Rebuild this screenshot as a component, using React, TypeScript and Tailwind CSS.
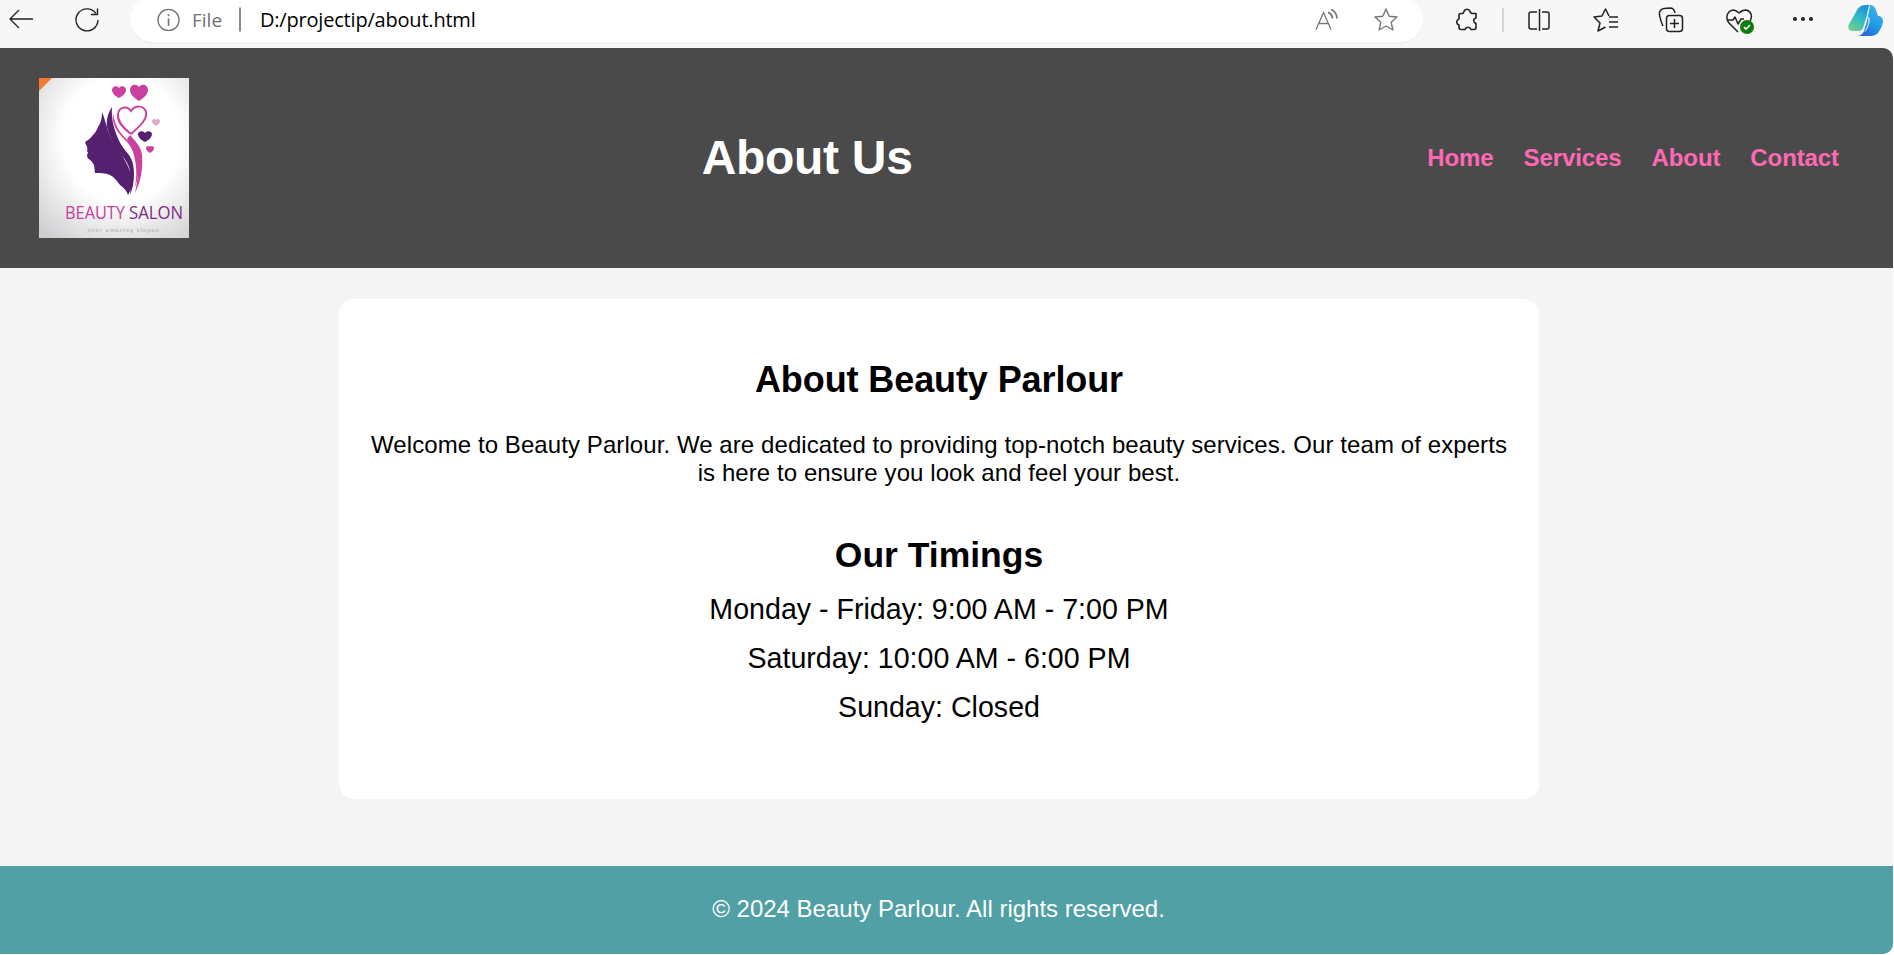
import React from "react";

const Logo = () => (
  <svg viewBox="0 0 150 160" className="w-[150px] h-[160px] block">
    <defs>
      <radialGradient id="logoBg" cx="55%" cy="38%" r="78%">
        <stop offset="0.5" stopColor="#ffffff" />
        <stop offset="1" stopColor="#cfcfd2" />
      </radialGradient>
    </defs>
    <rect width="150" height="160" fill="url(#logoBg)" />
    <path d="M0 0H13L0 13Z" fill="#f47b36" />
    {/* hearts */}
    <path d="M80 20c-4-2-7-5-7-8 0-4 5-5 7-2 2-3 7-2 7 2 0 3-3 6-7 8Z" fill="#c9409f" />
    <path d="M100 23c-5-3-9-7-9-11 0-5 6-7 9-3 3-4 9-2 9 3 0 4-4 8-9 11Z" fill="#c9409f" />
    <path d="M117 48c-2-1-4-3-4-5 0-2 3-3 4-1 1-2 4-1 4 1 0 2-2 4-4 5Z" fill="#e5a8d0" />
    <path d="M106 64c-4-2-7-5-7-8 0-3 5-4 7-1 2-3 7-2 7 1 0 3-3 6-7 8Z" fill="#55206f" />
    <path d="M111 75c-2-1-4-3-4-5 0-2 3-3 4-1 1-2 4-1 4 1 0 2-2 4-4 5Z" fill="#c9409f" />
    {/* heart shaped hair line */}
    <path d="M92 56C84 50 78 44 79 36c1-7 9-9 13-3 4-6 13-6 15 1 2 7-7 15-15 22" fill="none" stroke="#c9409f" strokeWidth="2" />
    <path d="M74 35c-1 7 1 13 5 19 5 7 12 11 15 20 4 12 4 24 2 35 5-13 4-24-1-36-3-8-9-13-14-19-4-6-6-12-7-19Z" fill="#c9409f" />
    <path d="M91 57c5 6 11 11 12 20 1 14-1 26-7 38 3-13 4-24 1-34-2-8-6-13-9-20Z" fill="#c9409f" />
    {/* face */}
    <path d="M63 34c0 6-1 11-4 15-1 3-3 6-5 8-2 3-5 5-8 7l2 5c1 2 0 3 0 4l1 2-1 2c0 2 1 4 3 5 3 2 3 4 4 5l1 8c5 0 10 0 15 2 4 2 7 6 10 10 4 3 7 6 8 10 3-5 5-10 4-15-1-9-5-16-9-23-4-7-10-13-13-21-3-7-4-14-8-24Z" fill="#55206f" />
    <path d="M73 29c-4 6-6 13-5 20 2 9 6 17 11 24 6 7 11 13 12 20 1 8 1 16 0 24 3-7 4-14 4-21 0-7-1-13-5-19-5-6-9-11-12-19-3-8-6-17-5-29Z" fill="#55206f" />
    <text x="26" y="141" fontFamily="'Open Sans', sans-serif" fontSize="18" fill="#c13f9c" textLength="60" lengthAdjust="spacingAndGlyphs">BEAUTY</text>
    <text x="90" y="141" fontFamily="'Open Sans', sans-serif" fontSize="18" fill="#7b2a84" textLength="54" lengthAdjust="spacingAndGlyphs">SALON</text>
    <text x="84" y="154" textAnchor="middle" fontFamily="'Liberation Serif', serif" fontStyle="italic" fontSize="6" fill="#a5a5a5" textLength="71">
      your amazing slogan
    </text>
  </svg>
);

const Copilot = () => (
  <svg viewBox="0 0 36 32" className="w-9 h-8 ml-[35px] -mt-[8px] shrink-0">
    <defs>
      <linearGradient id="copA" x1="0.7" y1="0" x2="0.2" y2="1">
        <stop offset="0" stopColor="#1c8fdc" />
        <stop offset="0.45" stopColor="#2fb8c8" />
        <stop offset="1" stopColor="#6fd08a" />
      </linearGradient>
      <linearGradient id="copB" x1="0.8" y1="0" x2="0.2" y2="1">
        <stop offset="0" stopColor="#3fb4ee" />
        <stop offset="0.55" stopColor="#1f9ae6" />
        <stop offset="1" stopColor="#2b5fd6" />
      </linearGradient>
    </defs>
    <path d="M22 1c3 0 5 2 6 5l2 6c3 0 5 2 5 5 0 4-3 10-6 13-2 1-4 2-6 2H9c3 0 6-2 7-5l3-10c1-5 2-10 3-16Z" fill="url(#copB)" />
    <path d="M22 1h-4C12 1 10 4 8 8L1 20c-2 4 0 7 4 7h5c4 0 5-2 6-6l3-10c1-5 1-9 3-10Z" fill="url(#copA)" />
    <path d="M20 13c1 5-1 11-4 15l2-1c3-4 4-9 4-13Z" fill="#e8f6ff" opacity=".75" />
  </svg>
);

const Toolbar = () => (
  <div className="h-12 bg-[#f7f7f7] flex items-center text-black overflow-hidden">
    {/* back */}
    <svg viewBox="0 0 24 20" className="w-6 h-5 ml-[9px] -mt-[10px] shrink-0" fill="none" stroke="#222" strokeWidth="1.3">
      <path d="M24 10H1M10 1 1 10l9 9" />
    </svg>
    {/* reload */}
    <svg viewBox="0 0 26 26" className="w-[26px] h-[26px] ml-[41px] -mt-[9px] shrink-0" fill="none" stroke="#222" strokeWidth="1.4">
      <path d="M22 6.500A11 11 0 1 0 24 13" />
      <path d="M23.500 1.500V7.500H17" />
    </svg>
    {/* address bar */}
    <div className="ml-[30px] w-[1293px] h-[46px] -mt-[8px] -translate-y-[0.5px] bg-white rounded-full flex items-center shrink-0 shadow-[0_1px_1px_rgba(0,0,0,0.06)]">
      <svg viewBox="0 0 24 24" className="w-[23px] h-[23px] ml-[27px] shrink-0" fill="none" stroke="#707070" strokeWidth="1.3">
        <circle cx="12" cy="12" r="11" />
        <path d="M12 10.500V18" strokeWidth="1.6" />
        <circle cx="12" cy="7" r="1" fill="#707070" stroke="none" />
      </svg>
      <span className="ml-3 w-[30px] text-[19px] text-[#6f6f6f] font-['Open_Sans',sans-serif]">File</span>
      <div className="ml-[17px] w-[2px] h-[24px] bg-[#8a8a8a]" />
      <span className="ml-[19px] text-[20px] text-black font-['Open_Sans',sans-serif] tracking-[-0.2px]">D:/projectip/about.html</span>
      <svg viewBox="0 0 24 22" className="w-6 h-[22px] ml-auto shrink-0" fill="none" stroke="#777" strokeWidth="1.3">
        <path d="M1 21 8.500 4 16 21M4 15h9" />
        <path d="M13 4c3 .5 4 3 4.500 6M16 1c3.500 1 6 5 6 9" strokeWidth="1.8" />
      </svg>
      <svg viewBox="0 0 24 24" className="w-6 h-6 ml-[35px] mr-[25px] shrink-0" fill="none" stroke="#777" strokeWidth="1.4" strokeLinejoin="round">
        <path d="m12 1.500 3.200 7.200 7.800.8-5.800 5.300 1.700 7.700L12 18.500l-6.900 4 1.700-7.700L1 9.500l7.800-.8Z" />
      </svg>
    </div>
    {/* puzzle */}
    <svg viewBox="0 0 22 24" className="w-[22px] h-6 ml-[33px] -mt-[8px] shrink-0" fill="none" stroke="#222" strokeWidth="1.6" strokeLinejoin="round">
      <path d="M8 3.500c1-3 5-3 6 0 .5 1.500 1 2 2.500 2h3.500v4.500c-3 .5-3 4.500 0 5.500v4c0 1.500-.5 2-2 2h-3c-1-3-5-3-6 0H5c-1.500 0-2-.5-2-2v-2.500c-3-1-3-5 0-6V7.500c0-1.500.5-2 2-2h1.500c.8 0 1.200-1 1.500-2Z" />
    </svg>
    <div className="ml-6 w-[2px] h-6 bg-[#d4d4d4] -mt-[8px] shrink-0" />
    {/* split screen */}
    <svg viewBox="0 0 24 24" className="w-6 h-6 ml-[23px] -mt-[8px] shrink-0" fill="none" stroke="#222" strokeWidth="1.5">
      <path d="M10 4H4a2 2 0 0 0-2 2v13a2 2 0 0 0 2 2h6M15 4h5a2 2 0 0 1 2 2v13a2 2 0 0 1-2 2h-5M12.500 1v22" />
    </svg>
    {/* favourites */}
    <svg viewBox="0 0 26 24" className="w-[26px] h-6 ml-[42px] -mt-[8px] shrink-0" fill="none" stroke="#222" strokeWidth="1.5" strokeLinejoin="round">
      <path d="M16 8 12.500 1 9 8l-8 1 6 6-2 8 7.500-4" />
      <path d="M16 9h9M16 14h9M16 19h9" />
    </svg>
    {/* collections */}
    <svg viewBox="0 0 26 26" className="w-[26px] h-[26px] ml-[39px] -mt-[8px] shrink-0" fill="none" stroke="#222" strokeWidth="1.5">
      <rect x="8.500" y="8.500" width="16" height="16" rx="3" />
      <path d="M16.500 12v9M12 16.500h9M5 19C3 15 2 11 1.500 8 1 4 3 2 6 1.500l6-.5c3 0 4.500 2 5 5" />
    </svg>
    {/* browser essentials */}
    <div className="relative w-7 h-6 ml-[41px] -mt-[6px] shrink-0">
      <svg viewBox="0 0 28 24" className="w-7 h-6" fill="none" stroke="#222" strokeWidth="1.5" strokeLinejoin="round">
        <path d="M13 23 4 14C0 9 2 2 8 1c3 0 4 1 6 3 2-2 4-3 7-3 5 1 7 6 4 11" />
        <path d="M2 11h6l2-3 3 7 3-5h3" />
      </svg>
      <div className="absolute -right-[1px] -bottom-[1px] w-[14px] h-[14px] rounded-full bg-[#107c10] flex items-center justify-center">
        <svg viewBox="0 0 10 10" className="w-[10px] h-[10px]" fill="none" stroke="#fff" strokeWidth="1.6">
          <path d="m2 5 2 2 4-4" />
        </svg>
      </div>
    </div>
    {/* more */}
    <div className="ml-10 w-5 flex justify-between -mt-[10px] shrink-0">
      <div className="w-1 h-1 rounded-full bg-[#222]" />
      <div className="w-1 h-1 rounded-full bg-[#222]" />
      <div className="w-1 h-1 rounded-full bg-[#222]" />
    </div>
    <Copilot />
  </div>
);

export default function App() {
  return (
    <div className="w-full h-[955px] bg-white flex flex-col font-['Liberation_Sans',Arial,sans-serif] overflow-hidden">
      <Toolbar />
      <div className="mr-px h-[906px] flex flex-col bg-[#f4f4f4] rounded-tr-[10px] rounded-br-[10px] overflow-hidden">
        <header className="h-[220px] bg-[#4a4a4a] flex items-center justify-between pl-[39px] pr-[54px] shrink-0">
          <Logo />
          <h1 className="text-[48px] leading-[55px] font-bold text-white -ml-[2px] tracking-[-0.3px] -mt-[2px]">About Us</h1>
          <nav className="flex gap-[30px] text-[24px] leading-[28px] font-bold text-[#ff69b4] tracking-[-0.1px]">
            <a>Home</a>
            <a>Services</a>
            <a>About</a>
            <a>Contact</a>
          </nav>
        </header>
        <main className="flex-1 pt-[31px]">
          <div className="w-[1200px] h-[500px] ml-[339px] bg-white rounded-[15px] pt-[60px] px-[30px] text-center text-black">
            <h2 className="text-[36px] leading-[41px] font-bold tracking-[-0.1px]">About Beauty Parlour</h2>
            <p className="mt-[31px] text-[24px] leading-[28px] tracking-[0.08px]">
              Welcome to Beauty Parlour. We are dedicated to providing top-notch beauty services. Our team of experts is here to ensure you look and feel your best.
            </p>
            <h3 className="mt-12 text-[35.5px] leading-[41px] font-bold">Our Timings</h3>
            <p className="mt-[17px] text-[28.6px] leading-[33px]">Monday - Friday: 9:00 AM - 7:00 PM</p>
            <p className="mt-4 text-[28.6px] leading-[33px]">Saturday: 10:00 AM - 6:00 PM</p>
            <p className="mt-4 text-[28.6px] leading-[33px]">Sunday: Closed</p>
          </div>
        </main>
        <footer className="h-[88px] bg-[#50a0a5] text-white text-[24px] leading-[28px] flex items-center justify-center shrink-0 pr-4 pb-[2px]">
          © 2024 Beauty Parlour. All rights reserved.
        </footer>
      </div>
    </div>
  );
}
